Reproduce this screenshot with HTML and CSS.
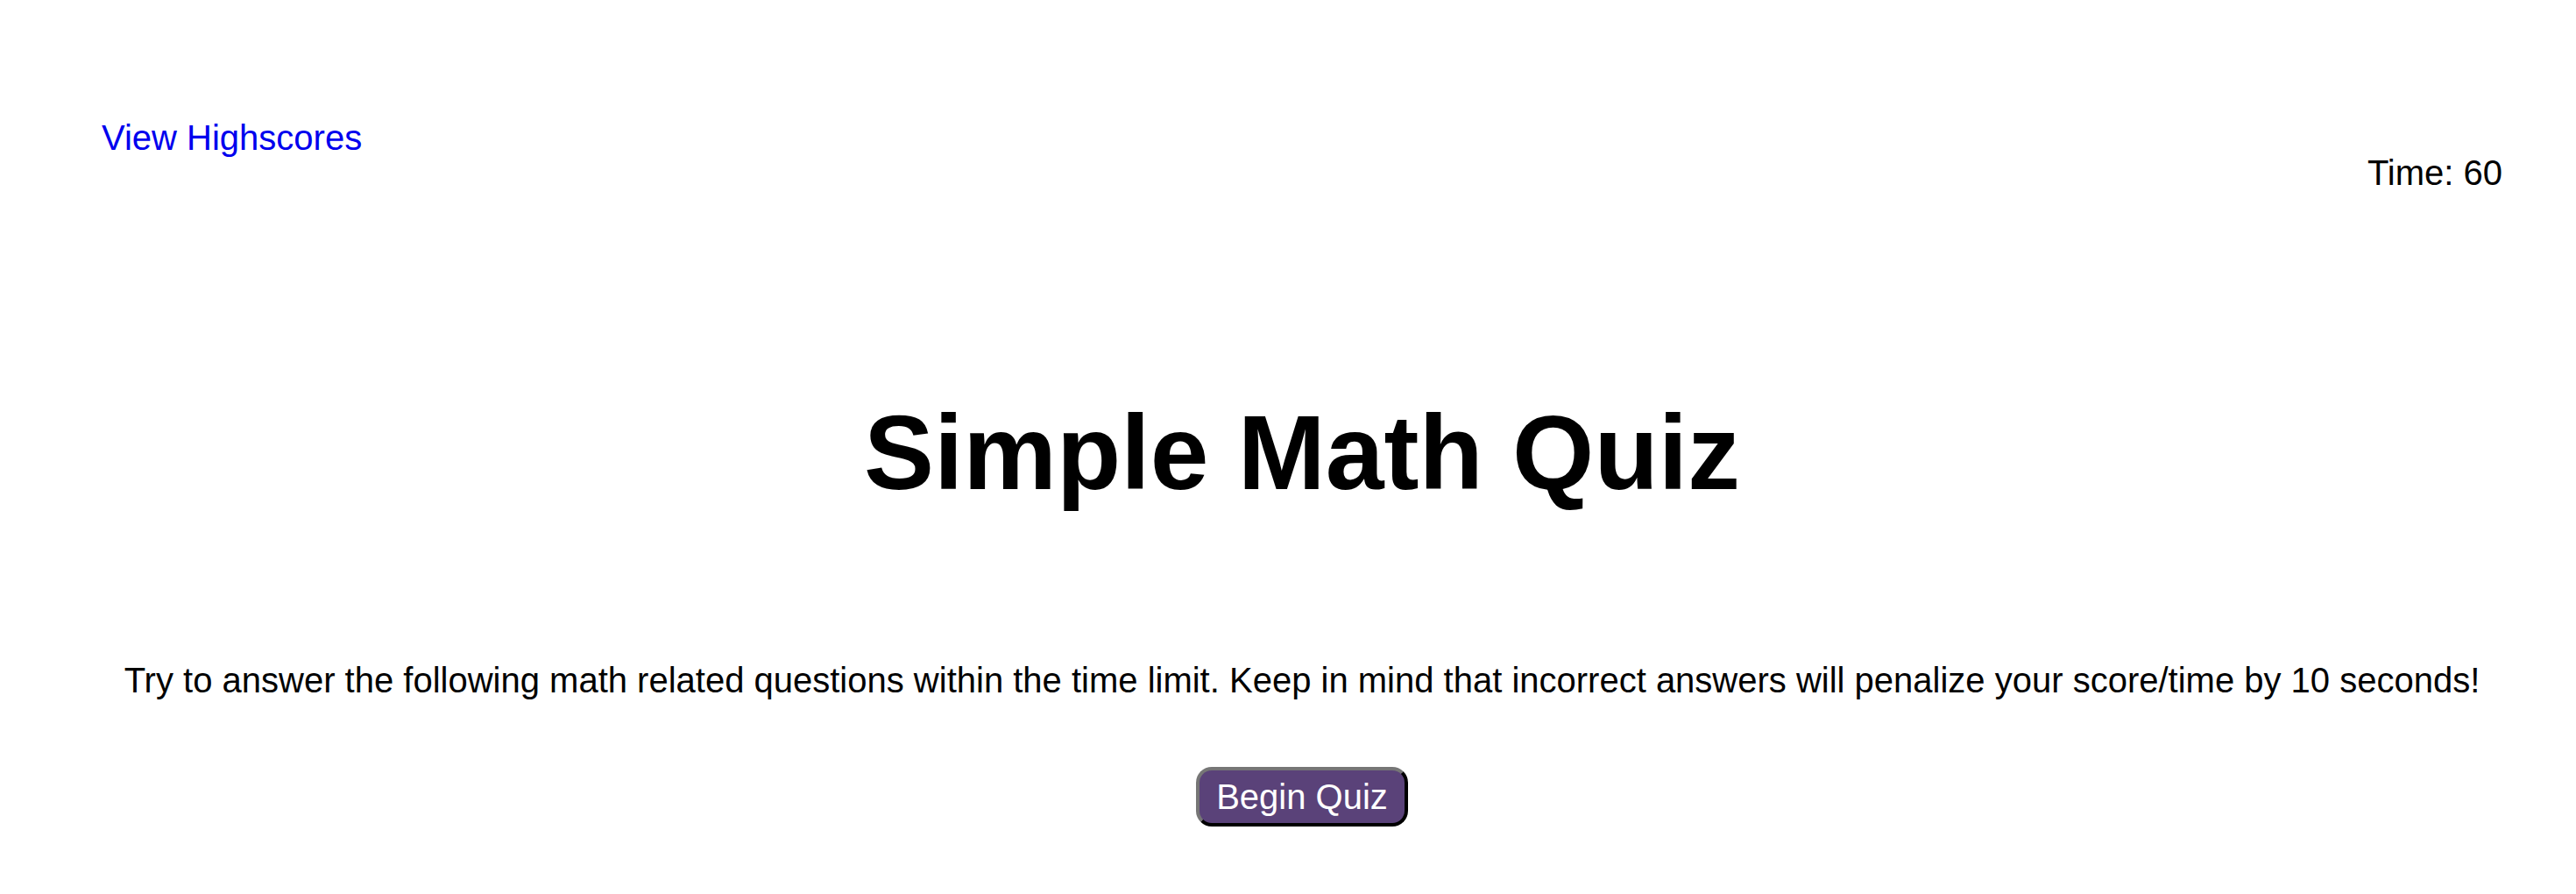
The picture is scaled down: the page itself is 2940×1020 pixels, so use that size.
FILE: index.html
```html
<!DOCTYPE html>
<html lang="en">
<head>
<meta charset="utf-8">
<title>Simple Math Quiz</title>
<link rel="stylesheet" href="styles.css">
</head>
<body>
<header class="top-bar">
  <a class="highscores-link" href="#">View Highscores</a>
  <div class="timer">Time: 60</div>
</header>
<main class="intro">
  <h1 class="title">Simple Math Quiz</h1>
  <p class="description">Try to answer the following math related questions within the time limit. Keep in mind that incorrect answers will penalize your score/time by 10 seconds!</p>
  <button class="start-btn" type="button">Begin Quiz</button>
</main>
</body>
</html>
```

FILE: styles.css
```css
html, body {
  margin: 0;
  padding: 0;
  background: #ffffff;
}

body {
  font-family: "Liberation Sans", Arial, sans-serif;
  color: #000000;
  font-size: 40px;
  line-height: 46px;
}

.top-bar {
  display: flex;
  justify-content: space-between;
  align-items: flex-start;
  padding: 134px 84px 0 116px;
}

.highscores-link {
  color: #0000ee;
  text-decoration: none;
}

.timer {
  margin-top: 40px;
}

.intro {
  padding: 0 84px 40px 116px;
  text-align: center;
}

.title {
  margin: 227px 0 0 0;
  font-size: 120px;
  line-height: 138px;
  font-weight: bold;
}

.description {
  margin: 168px 0 0 0;
}

.start-btn {
  margin-top: 76px;
  font-family: "Liberation Sans", Arial, sans-serif;
  font-size: 40px;
  line-height: 46px;
  color: #ffffff;
  background: #5a4279;
  border: 4px outset #767676;
  border-right-color: #1c1c1c;
  border-bottom-color: #1c1c1c;
  border-radius: 18px;
  padding: 7px 19px;
  cursor: pointer;
}
```
